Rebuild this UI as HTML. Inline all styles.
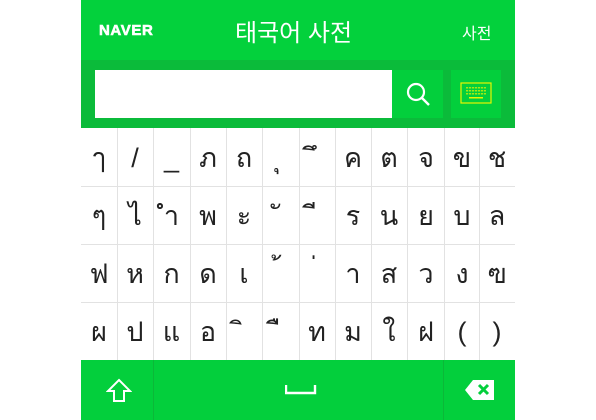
<!DOCTYPE html><html><head><meta charset="utf-8"><style>
body{margin:0;width:596px;height:420px;background:#fff;position:relative;overflow:hidden;font-family:"Liberation Sans","Noto Sans CJK KR",sans-serif}
.a{position:absolute}
.k{position:absolute;width:36px;height:58px;text-align:center;line-height:60px;font-size:27px;color:#222;font-family:"Liberation Sans","DejaVu Sans",sans-serif;font-weight:300}
</style></head><body>
<div class="a" style="left:81px;top:0;width:434px;height:60px;background:#03d13c"></div>
<div class="a" style="left:99px;top:22px;color:#fff;font-weight:900;font-size:15px;letter-spacing:0.6px;-webkit-text-stroke:0.6px #fff">NAVER</div>
<div class="a" style="left:235px;top:13px;color:#fff;font-size:24px">태국어 사전</div>
<div class="a" style="left:462px;top:20px;color:#fff;font-size:16px">사전</div>
<div class="a" style="left:81px;top:60px;width:434px;height:68px;background:#0bbb3a"></div>
<div class="a" style="left:95px;top:70px;width:297px;height:48px;background:#fff"></div>
<div class="a" style="left:392px;top:70px;width:51px;height:48px;background:#03cf3c"></div>
<svg class="a" style="left:404px;top:81px" width="28" height="28"><circle cx="12" cy="11" r="8" fill="none" stroke="#fff" stroke-width="2.2"/><line x1="18" y1="17" x2="25" y2="24" stroke="#fff" stroke-width="2.4"/></svg>
<div class="a" style="left:451px;top:70px;width:50px;height:48px;background:#03cf3c"></div>
<svg class="a" style="left:460px;top:82px" width="32" height="24"><rect x="1" y="1" width="30" height="20" fill="none" stroke="#e8f500" stroke-width="1.2"/><g fill="#e8f500"><rect x="6" y="5" width="20" height="1.5" opacity=".7"/><rect x="6" y="8" width="20" height="1.5" opacity=".7"/><rect x="6" y="11" width="20" height="1.5" opacity=".7"/><rect x="9" y="15" width="14" height="1.5"/></g><g stroke="#03cf3c" stroke-width="0.8"><line x1="8.5" y1="4" x2="8.5" y2="13"/><line x1="11.5" y1="4" x2="11.5" y2="13"/><line x1="14.5" y1="4" x2="14.5" y2="13"/><line x1="17.5" y1="4" x2="17.5" y2="13"/><line x1="20.5" y1="4" x2="20.5" y2="13"/><line x1="23.5" y1="4" x2="23.5" y2="13"/></g></svg>
<div class="a" style="left:81px;top:128px;width:434px;height:232px;background:#fff"></div>
<svg class="a" style="left:81px;top:128px" width="434" height="232">
<g stroke="#e2e2e2" stroke-width="1"><line x1="36.5" y1="0" x2="36.5" y2="232"/><line x1="72.5" y1="0" x2="72.5" y2="232"/><line x1="109.5" y1="0" x2="109.5" y2="232"/><line x1="145.5" y1="0" x2="145.5" y2="232"/><line x1="181.5" y1="0" x2="181.5" y2="232"/><line x1="218.5" y1="0" x2="218.5" y2="232"/><line x1="254.5" y1="0" x2="254.5" y2="232"/><line x1="290.5" y1="0" x2="290.5" y2="232"/><line x1="326.5" y1="0" x2="326.5" y2="232"/><line x1="363.5" y1="0" x2="363.5" y2="232"/><line x1="398.5" y1="0" x2="398.5" y2="232"/><line x1="0" y1="58.5" x2="434" y2="58.5"/><line x1="0" y1="116.5" x2="434" y2="116.5"/><line x1="0" y1="174.5" x2="434" y2="174.5"/></g></svg>
<div id="kb"></div>
<div class="a" style="left:81px;top:360px;width:434px;height:60px;background:#03cf3c"></div>
<div class="a" style="left:153px;top:360px;width:1px;height:60px;background:#0bb838"></div>
<div class="a" style="left:443px;top:360px;width:1px;height:60px;background:#0bb838"></div>
<svg class="a" style="left:106px;top:378px" width="26" height="26"><path d="M13 2 L24 13 L18 13 L18 23 L8 23 L8 13 L2 13 Z" fill="none" stroke="#fff" stroke-width="2"/></svg>
<svg class="a" style="left:285px;top:384px" width="32" height="12"><path d="M1 1 V9 H30 V1" fill="none" stroke="#fff" stroke-width="2.4"/></svg>
<svg class="a" style="left:464px;top:379px" width="32" height="22"><path d="M9 1 H30 V21 H9 L1 11 Z" fill="#fff"/><path d="M15 6 L24 15 M24 6 L15 15" stroke="#03cf3c" stroke-width="3"/></svg>
<script>
var rows=["ๅ/_ภถุึคตจขช","ๆไำพะัีรนยบล","ฟหกดเ้่าสวงฃ","ผปแอิืทมใฝ()"];
var xs=[81,117,153,190,226,262,299,335,371,407,445,479,515],h="";
rows.forEach(function(r,i){Array.from(r).forEach(function(c,j){h+='<div class="k" style="left:'+xs[j]+'px;top:'+(128+i*58)+'px;width:'+(xs[j+1]-xs[j])+'px">'+c+'</div>';});});
document.getElementById("kb").innerHTML=h;
</script>
</body></html>
